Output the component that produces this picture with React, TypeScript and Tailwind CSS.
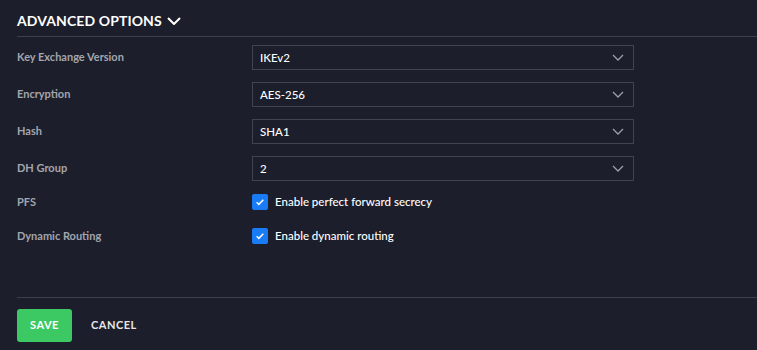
import React from "react";

const fields = [
    { label: "Key Exchange Version", value: "IKEv2" },
    { label: "Encryption", value: "AES-256" },
    { label: "Hash", value: "SHA1" },
    { label: "DH Group", value: "2" },
];

const toggles = [
    { label: "PFS", text: "Enable perfect forward secrecy" },
    { label: "Dynamic Routing", text: "Enable dynamic routing" },
];

function Chevron({ className }: { className?: string }) {
    return (
        <svg viewBox="0 0 12 7" className={className} fill="none" stroke="currentColor" strokeWidth="1.3">
            <path d="M1 1l5 5 5-5" />
        </svg>
    );
}

function Check() {
    return (
        <span className="flex h-4 w-4 items-center justify-center rounded-[2px] bg-[#1a7cf5]">
            <svg viewBox="0 0 12 12" className="h-[10px] w-[10px]" fill="none" stroke="white" strokeWidth="1.8">
                <path d="M2 6.3l2.6 2.5L10 3.3" />
            </svg>
        </span>
    );
}

export default function App() {
    return (
        <div
            className="h-[350px] w-[757px] bg-[#1c1e2b] pl-[17px] text-white"
            style={{ fontFamily: "Lato, 'Noto Sans', sans-serif" }}
        >
            <div className="flex h-[37px] items-center border-b border-[#3b4149] pt-[5px]">
                <span className="text-[14px] font-bold tracking-[0.1px]">ADVANCED OPTIONS</span>
                <svg viewBox="0 0 14 8" className="ml-[5px] h-[8px] w-[14px]" fill="none" stroke="white" strokeWidth="2">
                    <path d="M1 1l6 6 6-6" />
                </svg>
            </div>

            <div className="flex flex-col gap-[12px] pt-[8px]">
                {fields.map((f) => (
                    <div key={f.label} className="flex h-[25px] items-center">
                        <span className="w-[235px] text-[11px] font-bold text-[#a3a6ae]">{f.label}</span>
                        <div className="flex h-[25px] w-[382px] items-center justify-between border border-[#40454d] pl-[7px] pr-[9px]">
                            <span className="text-[11.5px] font-medium">{f.value}</span>
                            <Chevron className="h-[7px] w-[12px] text-[#9da0a7]" />
                        </div>
                    </div>
                ))}
            </div>

            <div className="flex flex-col gap-[18px] pt-[13px]">
                {toggles.map((t) => (
                    <div key={t.label} className="flex h-[16px] items-center">
                        <span className="w-[235px] text-[11px] font-bold text-[#a3a6ae]">{t.label}</span>
                        <Check />
                        <span className="ml-[7px] text-[11.5px] font-medium">{t.text}</span>
                    </div>
                ))}
            </div>

            <div className="mt-[53px] border-t border-[#3b4149] pt-[11px]">
                <div className="flex items-center">
                    <button className="h-[33px] w-[55px] rounded-[3px] bg-[#3cc862] text-[11px] font-bold tracking-[0.5px] text-white">
                        SAVE
                    </button>
                    <button className="ml-[19px] text-[11px] font-bold tracking-[0.5px] text-[#e6e7ea]">
                        CANCEL
                    </button>
                </div>
            </div>
        </div>
    );
}
